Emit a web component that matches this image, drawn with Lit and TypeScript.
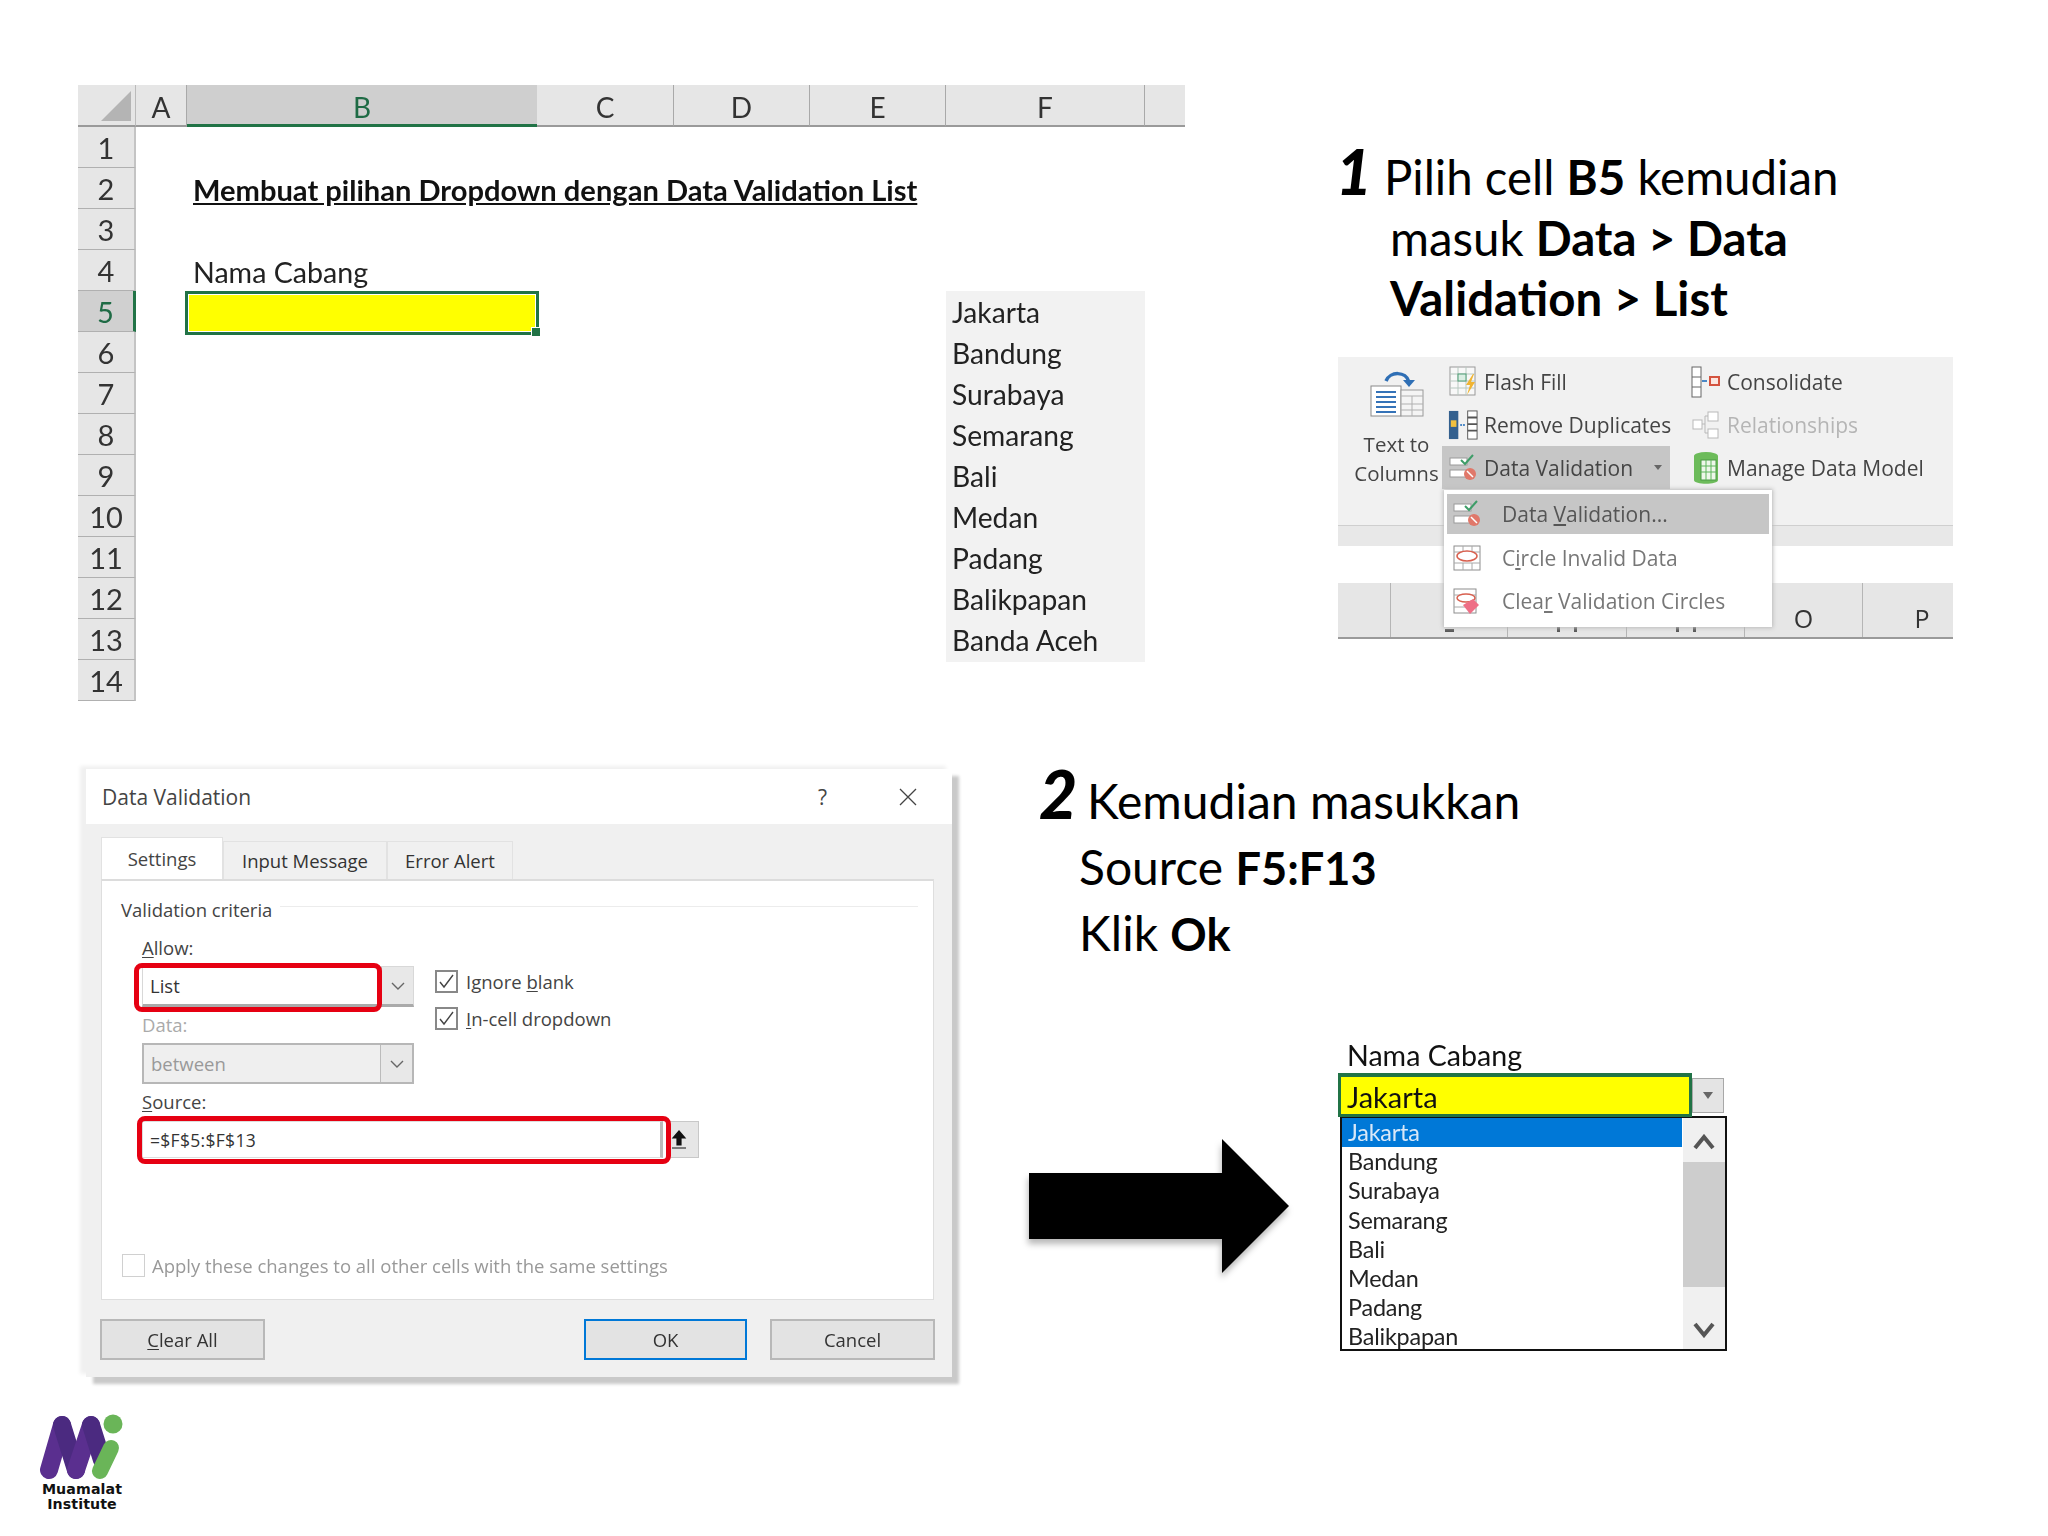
import { LitElement, html, css, svg } from "lit";
import { customElement } from "lit/decorators.js";

const COLS = ["A", "B", "C", "D", "E", "F", ""];
const CITIES = ["Jakarta", "Bandung", "Surabaya", "Semarang", "Bali", "Medan", "Padang", "Balikpapan", "Banda Aceh"];

const dvIcon = html`<svg width="28" height="28" viewBox="0 0 28 28">
  <rect x="1" y="4" width="17" height="7" fill="#fff" stroke="#9a9a9a"/><rect x="1" y="16" width="17" height="7" fill="#fff" stroke="#9a9a9a"/>
  <path d="M12 6l4 4 8-9" fill="none" stroke="#3e9d68" stroke-width="2"/><circle cx="21" cy="20" r="6" fill="#e0786a"/><path d="M18 17l6 6" stroke="#fff" stroke-width="1.5"/></svg>`;
const flashIcon = html`<svg width="28" height="32" viewBox="0 0 28 32"><rect x="1" y="1" width="25" height="28" fill="#f8f8f8" stroke="#9a9a9a"/>
  <path d="M1 8h25M1 15h25M1 22h25M9 1v28M17 1v28" stroke="#b8c8c0"/><rect x="9" y="8" width="8" height="7" fill="#dbeee3" stroke="#4c9c74"/><path d="M24 8l-7 11h4l-3 10 8-13h-4l3-8z" fill="#f0b432"/></svg>`;
const dupIcon = html`<svg width="32" height="32" viewBox="0 0 32 32"><rect x="1" y="1" width="10" height="30" fill="#33608f"/><rect x="3" y="11" width="6" height="7" fill="#f0c040"/>
  <rect x="21" y="1" width="10" height="30" fill="#fff" stroke="#555"/><path d="M21 8h10M21 15h10M21 22h10" stroke="#555" stroke-width="2"/><path d="M13 16h6" stroke="#4a87c5" stroke-width="2" stroke-dasharray="2 1"/></svg>`;
const consIcon = html`<svg width="30" height="32" viewBox="0 0 30 32"><rect x="1" y="1" width="9" height="30" fill="#fff" stroke="#666"/><path d="M1 11h9M1 21h9" stroke="#666"/><path d="M11 15h5" stroke="#4a87c5" stroke-width="2"/><rect x="19" y="11" width="9" height="8" fill="#fbe6e0" stroke="#d4533f" stroke-width="2"/></svg>`;
const relIcon = html`<svg width="30" height="30" viewBox="0 0 30 30" fill="#fff" stroke="#b9b9b9"><rect x="2" y="10" width="9" height="9"/><rect x="17" y="2" width="10" height="9"/><rect x="17" y="19" width="10" height="9"/><path d="M11 14h3V6h3M14 14v9h3" fill="none"/></svg>`;
const modelIcon = html`<svg width="28" height="34" viewBox="0 0 28 34"><ellipse cx="14" cy="5" rx="12" ry="4" fill="#6cbb5a"/><path d="M2 5v24c0 5 24 5 24 0V5z" fill="#6cbb5a"/><rect x="9" y="9" width="15" height="20" fill="#eef7ea" stroke="#4a9a44"/><path d="M9 15h15M9 21h15M14 9v20M19 9v20" stroke="#5db55a"/></svg>`;
const circleIcon = html`<svg width="28" height="28" viewBox="0 0 28 28"><rect x="1" y="2" width="26" height="24" fill="#fff" stroke="#8e8e8e"/><path d="M1 19h26M10 19v7M19 19v7M1 8h26M10 2v6M19 2v6" stroke="#a8a8a8"/><ellipse cx="14" cy="12" rx="10" ry="5" fill="#fff" stroke="#d8604f" stroke-width="1.5"/></svg>`;
const clearIcon = html`<svg width="28" height="28" viewBox="0 0 28 28"><rect x="1" y="2" width="22" height="24" fill="#fff" stroke="#8e8e8e"/><path d="M1 8h22M1 20h22" stroke="#a8a8a8"/><ellipse cx="13" cy="11" rx="9" ry="4" fill="#fff" stroke="#d8604f" stroke-width="1.5"/><path d="M10 18l10-6 6 6-9 9z" fill="#ee6f86"/></svg>`;
const chevron = html`<svg width="14" height="10" viewBox="0 0 14 10"><path d="M1 2l6 6 6-6" fill="none" stroke="#666" stroke-width="1.4"/></svg>`;
const tick = html`<svg width="17" height="15" viewBox="0 0 17 15"><path d="M2 8l4 5L15 1" fill="none" stroke="#444" stroke-width="1.4"/></svg>`;

@customElement("app-root")
export class AppRoot extends LitElement {
  static styles = css`
    :host { display: block; width: 2048px; height: 1536px; background: #fff; overflow: hidden; font-family: Lato, "Liberation Sans", sans-serif; color: #111; }
    .slide { display: flex; flex-direction: column; width: 2048px; height: 1536px; }

    .row1 { display: flex; height: 768px; padding: 85px 0 0 78px; box-sizing: border-box; }
    .row2 { display: flex; height: 646px; padding: 0 0 0 86px; box-sizing: border-box; }
    .row3 { padding: 0 0 0 36px; }
    .shot { filter: blur(0.55px); }
    .shot.soft { filter: blur(0.75px); }

    /* spreadsheet */
    .sheet { display: grid; grid-template-columns: 58px 51px 350px 137px 136px 136px 199px 40px; grid-template-rows: 42px repeat(14, 41px); width: 1107px; height: 616px; font-size: 29px; color: #222; }
    .corner { background: #e6e6e6; border-bottom: 2px solid #9a9a9a; box-sizing: border-box; border-right: 1px solid #bbb; display: flex; align-items: flex-end; justify-content: flex-end; padding: 0 4px 4px 0; }
    .colh { background: #e6e6e6; border-bottom: 2px solid #9a9a9a; border-right: 1px solid #a9a9a9; box-sizing: border-box; display: flex; align-items: center; justify-content: center; font-size: 28px; color: #333; padding-top: 4px; }
    .colh.sel { background: #cfcfcf; color: #1f6b45; border-bottom: 3px solid #217346; border-right: 0; }
    .colh.last { border-right: 0; }
    .rowh { grid-column: 1; background: #e6e6e6; border-bottom: 1px solid #b0b0b0; border-right: 2px solid #c4c4c4; box-sizing: border-box; display: flex; align-items: center; justify-content: center; font-size: 29px; color: #333; }
    .rowh.sel { background: #d0d0d0; color: #1f6b45; border-right: 3px solid #217346; }
    .heading { grid-column: 3 / 8; grid-row: 3; padding: 2px 0 0 6px; font-weight: 700; font-size: 29.1px; text-decoration: underline; white-space: nowrap; align-self: center; color: #111; }
    .label { grid-column: 3; grid-row: 5; padding-left: 6px; font-size: 28.6px; align-self: end; line-height: 38px; white-space: nowrap; color: #222; }
    .yellow { grid-column: 3; grid-row: 6; background: #ffff00; border: 3px solid #217346; box-shadow: inset 0 0 0 1px #fff; position: relative; margin: 0 -2px 0 -2px; height: 44px; box-sizing: border-box; }
    .handle { position: absolute; right: -5px; bottom: -5px; width: 8px; height: 8px; background: #217346; border: 1px solid #fff; }
    .flist { grid-column: 7; grid-row: 6 / 15; background: #f2f2f2; display: grid; grid-template-rows: repeat(9, 41px); height: 371px; }
    .flist div { padding: 1px 0 0 6px; font-size: 28.2px; line-height: 41px; color: #222; }

    /* steps */
    .col1 { margin-left: 153px; width: 615px; display: flex; flex-direction: column; }
    .step1 { font-size: 47.4px; line-height: 60.5px; padding: 62px 0 0 52px; height: 256px; box-sizing: border-box; color: #000; }
    .step1 .num { display: inline-block; width: 48px; margin-left: -54px; font-size: 62px; font-weight: 900; font-style: italic; line-height: 0; }
    .step1 b { font-size: 1em; }
    .step2 { font-size: 48px; line-height: 66px; padding: 0 0 0 42px; color: #000; margin: 0 0 0 8px; height: 271px; box-sizing: border-box; }
    .step2 .num { display: inline-block; width: 48px; margin-left: -40px; font-size: 66px; font-weight: 900; font-style: italic; line-height: 0; }
    b { font-weight: 700; font-size: 0.94em; line-height: 0; }

    /* ribbon */
    .ribbon { width: 615px; height: 282px; background: #f1f1f1; position: relative; font-family: "Open Sans", "Liberation Sans", sans-serif; font-size: 21px; color: #444; display: flex; flex-direction: column; margin-top: 16px; }
    .groups { display: flex; height: 168px; box-sizing: border-box; padding-top: 3px; }
    .t2c { width: 104px; display: flex; flex-direction: column; align-items: center; padding-left: 13px; box-sizing: border-box; }
    .t2c svg { margin-top: 9px; }
    .t2c .lab { text-align: center; line-height: 29px; margin-top: 13px; font-size: 20.5px; }
    .rcol { display: flex; flex-direction: column; }
    .ritem { display: flex; align-items: center; height: 43px; gap: 6px; white-space: nowrap; padding-left: 6px; box-sizing: border-box; }
    .ritem svg { width: 30px; flex: none; }
    .rcol.a { width: 228px; }
    .rcol.b { margin-left: 15px; }
    .ritem.on { background: #c6c6c6; width: 228px; }
    .ritem.off { color: #b5b5b5; }
    .caret { margin-left: auto; margin-right: 8px; width: 0; height: 0; border: 4px solid transparent; border-top: 5px solid #666; border-bottom: 0; }
    .band { height: 21px; background: #e8e8e8; border-top: 1px solid #cfcfcf; box-sizing: border-box; }
    .white { height: 37px; background: #fff; }
    .cols2 { height: 56px; background: #e6e6e6; border-bottom: 2px solid #9a9a9a; display: grid; grid-template-columns: 53px 117px 119px 118px 118px 118px; box-sizing: border-box; overflow: hidden; }
    .cols2 div { border-right: 1px solid #b5b5b5; display: flex; align-items: center; justify-content: center; font-size: 25px; color: #333; padding-top: 16px; box-sizing: border-box; }
    .cols2 div:last-child { border-right: 0; }
    .cols2 div.st { align-items: flex-end; padding: 0 0 5px; gap: 14px; }
    .cols2 .st i { width: 3px; height: 5px; background: #555; }
    .cols2 .st i.w { width: 9px; height: 3px; }
    .menu { position: absolute; left: 106px; top: 133px; width: 328px; height: 137px; background: #fff; box-shadow: 0 0 4px 1px #bbb; box-sizing: border-box; padding: 4px 3px; display: flex; flex-direction: column; }
    .mi { display: flex; align-items: center; height: 44px; padding-left: 6px; gap: 21px; color: #777; white-space: nowrap; }
    .mi.on { background: #c6c6c6; color: #555; height: 41px; margin-bottom: 2px; }
    u { text-underline-offset: 2px; }

    /* dialog */
    .dialog { width: 866px; height: 608px; margin-top: 1px; background: #f0f0f0; box-shadow: 7px 7px 3px #c9c9c9, -6px -3px 4px #f0f0f0; display: flex; flex-direction: column; font-family: "Open Sans", "Liberation Sans", sans-serif; font-size: 18.5px; color: #333; flex: none; }
    .dt { height: 55px; background: #fff; display: flex; align-items: center; padding: 0 35px 0 16px; font-size: 21px; color: #444; }
    .dt span:first-child { flex: 1; }
    .dt .q { margin-right: 72px; font-size: 21px; }
    .tabs { display: flex; margin: 13px 18px 0 15px; height: 42px; align-items: flex-end; }
    .tab { height: 38px; display: flex; align-items: center; justify-content: center; background: #f0f0f0; border: 1px solid #e2e2e2; border-bottom: 0; box-sizing: border-box; color: #333; }
    .tab.on { height: 42px; background: #fff; color: #444; }
    .panel { margin: 0 18px 0 15px; height: 421px; background: #fff; border: 1px solid #dedede; border-top: 2px solid #dcdcdc; box-sizing: border-box; display: flex; flex-direction: column; padding: 0 15px 0 19px; }
    .legend { display: flex; align-items: center; gap: 8px; height: 24px; margin-top: 16px; white-space: nowrap; color: #444; }
    .legend i { flex: 1; height: 1px; background: #ececec; margin-top: -5px; }
    .form { display: flex; padding-left: 21px; margin-top: 15px; }
    .fields { width: 272px; }
    .fl { height: 24px; line-height: 24px; color: #444; }
    .fl.dis { color: #aaa; }
    .combo { position: relative; display: flex; height: 41px; background: #fff; border: 1px solid #d8d8d8; border-bottom: 3px solid #aaa; box-sizing: border-box; margin: 6px 0 6px; padding-left: 7px; align-items: center; color: #333; }
    .combo .btn { margin-left: auto; width: 31px; align-self: stretch; background: #e8e8e8; border-left: 1px solid #bbb; display: flex; align-items: center; justify-content: center; }
    .combo.dis { background: #efefef; border: 2px solid #b7b7b7; color: #999; }
    .red { position: absolute; border: 5px solid #e60012; border-radius: 8px; box-sizing: border-box; }
    .red.a { left: -9px; top: -4px; width: 248px; height: 49px; }
    .red.b { left: -6px; top: -6px; width: 534px; height: 48px; }
    .srcrow { display: flex; gap: 5px; width: 557px; margin: 7px 0 0 21px; height: 37px; }
    .src { position: relative; width: 521px; background: #fff; border: 1px solid #ddd; border-right: 3px solid #bbb; box-sizing: border-box; padding-left: 7px; display: flex; align-items: center; font-size: 17.5px; letter-spacing: 0.3px; }
    .srcbtn { width: 31px; background: #e6e6e6; border: 1px solid #c8c8c8; box-sizing: border-box; display: flex; align-items: center; padding-left: 2px; font-weight: 700; color: #111; }
    .checks { margin: 34px 0 0 21px; display: flex; flex-direction: column; gap: 14px; }
    .ck { display: flex; align-items: center; gap: 8px; height: 23px; white-space: nowrap; color: #444; }
    .box { width: 23px; height: 23px; border: 2px solid #888; box-sizing: border-box; display: flex; align-items: center; justify-content: center; background: #fff; flex: none; }
    .apply { margin: auto 0 21px 1px; display: flex; align-items: center; gap: 7px; color: #999; white-space: nowrap; }
    .apply .box { border-color: #d0d0d0; border-width: 1px; }
    .actions { display: flex; margin: 19px 17px 0 14px; height: 41px; gap: 23px; }
    .actions button { font: inherit; font-size: 18.5px; color: #333; background: #e3e3e3; border: 2px solid #b8b8b8; width: 165px; padding: 0; }
    .actions button.ok { margin-left: auto; border-color: #0078d7; width: 163px; }

    /* right column */
    .col2 { margin-left: 77px; width: 700px; display: flex; flex-direction: column; }
    .lower { display: flex; }
    .arrow { margin-top: 100px; filter: drop-shadow(-1px 5px 3px #b8b8b8); flex: none; }
    .dd { margin: 0 0 0 49px; width: 389px; font-size: 26.5px; color: #111; }
    .ddl { padding-left: 9px; line-height: 32px; height: 34px; font-size: 28.6px; }
    .ddc { display: flex; }
    .cell { width: 354px; height: 44px; background: #ffff00; border: 3px solid #217346; box-sizing: border-box; padding-left: 6px; line-height: 40px; font-size: 29px; border-top-width: 4px; }
    .ddb { width: 32px; height: 35px; margin-top: 5px; background: #e4e4e4; border: 1px solid #a8a8a8; box-sizing: border-box; display: flex; align-items: center; justify-content: center; }
    .ddb span { width: 0; height: 0; border: 5px solid transparent; border-top: 7px solid #666; border-bottom: 0; }
    .ddlist { margin: -1px 0 0 2px; width: 387px; height: 235px; border: 2px solid #111; box-sizing: border-box; background: #fff; display: flex; overflow: hidden; }
    .items { flex: 1; }
    .items div { height: 29.2px; line-height: 29px; padding-left: 6px; white-space: nowrap; font-size: 23.4px; letter-spacing: -0.2px; color: #222; }
    .items div.on { background: #0078d7; color: #d8e8f8; }
    .sb { width: 42px; background: #f0f0f0; display: flex; flex-direction: column; margin-left: 1px; }
    .sbb { height: 44px; display: flex; align-items: center; justify-content: center; padding-top: 4px; box-sizing: border-box; }
    .sbb.dn { height: 62px; padding-top: 24px; }
    .thumb { flex: 1; background: #cdcdcd; }
    .logo { display: flex; flex-direction: column; width: 92px; font-family: "DejaVu Sans", sans-serif; font-weight: 700; font-size: 14.2px; line-height: 15px; align-items: center; color: #111; letter-spacing: 0.1px; }
  `;

  render() {
    return html`<div class="slide">
      <div class="row1">
        ${this.sheet()}
        <div class="col1">
          <div class="step1">
            <div><span class="num">1</span>Pilih cell <b>B5</b> kemudian</div>
            <div>masuk <b>Data &gt; Data</b></div>
            <div><b>Validation &gt; List</b></div>
          </div>
          ${this.ribbon()}
        </div>
      </div>
      <div class="row2">
        ${this.dialog()}
        <div class="col2">
          <div class="step2">
            <div><span class="num">2</span>Kemudian masukkan</div>
            <div>Source <b>F5:F13</b></div>
            <div>Klik <b>Ok</b></div>
          </div>
          <div class="lower">
            <svg class="arrow" width="260" height="134" viewBox="0 0 260 134"><path d="M0 34h193V0l67 67-67 67v-34H0z" fill="#000"/></svg>
            ${this.dropdown()}
          </div>
        </div>
      </div>
      <div class="row3">${this.logo()}</div>
    </div>`;
  }

  sheet() {
    return html`<div class="sheet shot">
      <div class="corner"><svg width="30" height="30" viewBox="0 0 30 30"><path d="M30 0v30H0z" fill="#b4b4b4"/></svg></div>
      ${COLS.map((c) => html`<div class="colh ${c === "B" ? "sel" : ""} ${c === "" ? "last" : ""}">${c}</div>`)}
      ${Array.from({ length: 14 }, (_, i) => html`<div class="rowh ${i === 4 ? "sel" : ""}" style="grid-row:${i + 2}">${i + 1}</div>`)}
      <div class="heading">Membuat pilihan Dropdown dengan Data Validation List</div>
      <div class="label">Nama Cabang</div>
      <div class="yellow"><span class="handle"></span></div>
      <div class="flist">${CITIES.map((c) => html`<div>${c}</div>`)}</div>
    </div>`;
  }

  ribbon() {
    return html`<div class="ribbon shot soft">
      <div class="groups">
        <div class="t2c">
          <svg width="54" height="48" viewBox="0 0 54 48">
            <path d="M16 12C20 2 36 2 39 13" fill="none" stroke="#2f6fb5" stroke-width="3.5"/><path d="M33 11l6 7 6-7z" fill="#2f6fb5"/>
            <rect x="1" y="17" width="30" height="30" fill="#fff" stroke="#8a8a8a"/><path d="M6 23h20M6 28h20M6 33h20M6 38h20M6 43h20" stroke="#3573b8" stroke-width="2"/>
            <rect x="31" y="21" width="22" height="26" fill="#f4f4f4" stroke="#9a9a9a"/><path d="M31 27h22M42 27v20M31 35h22M31 41h22" stroke="#b0b0b0"/>
          </svg>
          <div class="lab">Text to<br />Columns</div>
        </div>
        <div class="rcol a">
          <div class="ritem">${flashIcon}Flash Fill</div>
          <div class="ritem">${dupIcon}Remove Duplicates</div>
          <div class="ritem on">${dvIcon}Data Validation<span class="caret"></span></div>
        </div>
        <div class="rcol b">
          <div class="ritem">${consIcon}Consolidate</div>
          <div class="ritem off">${relIcon}Relationships</div>
          <div class="ritem">${modelIcon}Manage Data Model</div>
        </div>
      </div>
      <div class="band"></div>
      <div class="white"></div>
      <div class="cols2">
        <div></div>
        <div class="st"><i class="w"></i></div>
        <div class="st"><i></i><i></i></div>
        <div class="st"><i></i><i></i></div>
        <div>O</div><div>P</div>
      </div>
      <div class="menu">
        <div class="mi on">${dvIcon}<span>Data <u>V</u>alidation...</span></div>
        <div class="mi">${circleIcon}<span>C<u>i</u>rcle Invalid Data</span></div>
        <div class="mi">${clearIcon}<span>Clea<u>r</u> Validation Circles</span></div>
      </div>
    </div>`;
  }

  dialog() {
    return html`<div class="dialog shot soft">
      <div class="dt"><span>Data Validation</span><span class="q">?</span>
        <svg width="18" height="18" viewBox="0 0 18 18"><path d="M1 1l16 16M17 1L1 17" stroke="#444" stroke-width="1.3"/></svg></div>
      <div class="tabs">
        <div class="tab on" style="width:122px">Settings</div>
        <div class="tab" style="width:164px">Input Message</div>
        <div class="tab" style="width:126px">Error Alert</div>
      </div>
      <div class="panel">
        <div class="legend"><span>Validation criteria</span><i></i></div>
        <div class="form">
          <div class="fields">
            <div class="fl"><u>A</u>llow:</div>
            <div class="combo">List<span class="btn">${chevron}</span><div class="red a"></div></div>
            <div class="fl dis">Data:</div>
            <div class="combo dis">between<span class="btn">${chevron}</span></div>
            <div class="fl"><u>S</u>ource:</div>
          </div>
          <div class="checks">
            <div class="ck"><span class="box">${tick}</span><span>Ignore <u>b</u>lank</span></div>
            <div class="ck"><span class="box">${tick}</span><span><u>I</u>n-cell dropdown</span></div>
          </div>
        </div>
        <div class="srcrow">
          <div class="src">=$F$5:$F$13<div class="red b"></div></div>
          <div class="srcbtn"><svg width="16" height="20" viewBox="0 0 16 20"><path d="M8 1l6 7h-4v7H6V8H2zM1 18h14" fill="#111" stroke="#111" stroke-width="1.2"/></svg></div>
        </div>
        <div class="apply"><span class="box"></span><span>Apply these changes to all other cells with the same settings</span></div>
      </div>
      <div class="actions">
        <button><u>C</u>lear All</button>
        <button class="ok">OK</button>
        <button>Cancel</button>
      </div>
    </div>`;
  }

  dropdown() {
    return html`<div class="dd shot">
      <div class="ddl">Nama Cabang</div>
      <div class="ddc"><div class="cell">Jakarta</div><div class="ddb"><span></span></div></div>
      <div class="ddlist">
        <div class="items">${CITIES.slice(0, 8).map((c, i) => html`<div class="${i === 0 ? "on" : ""}">${c}</div>`)}</div>
        <div class="sb">
          <div class="sbb"><svg width="22" height="16" viewBox="0 0 22 16"><path d="M2 14l9-11 9 11" fill="none" stroke="#555" stroke-width="4"/></svg></div>
          <div class="thumb"></div>
          <div class="sbb dn"><svg width="22" height="16" viewBox="0 0 22 16"><path d="M2 2l9 11 9-11" fill="none" stroke="#555" stroke-width="4"/></svg></div>
        </div>
      </div>
    </div>`;
  }

  logo() {
    return html`<div class="logo">
      <svg width="92" height="68" viewBox="0 0 92 68">
        ${svg`<g fill="none" stroke-linecap="round" stroke-width="18">
          <path d="M26 11L13 56" stroke="#5a2f8f"/>
          <path d="M26 11L40 56" stroke="#4b2a80"/>
          <path d="M55 11L40 56" stroke="#5a2f8f"/>
          <path d="M55 11L66 46" stroke="#4b2a80"/>
          <path d="M75 34L64 57" stroke="#6ab558" stroke-width="16"/>
        </g><circle cx="77" cy="10" r="9.5" fill="#6ab558"/>`}
      </svg>
      <span>Muamalat</span><span>Institute</span>
    </div>`;
  }
}
